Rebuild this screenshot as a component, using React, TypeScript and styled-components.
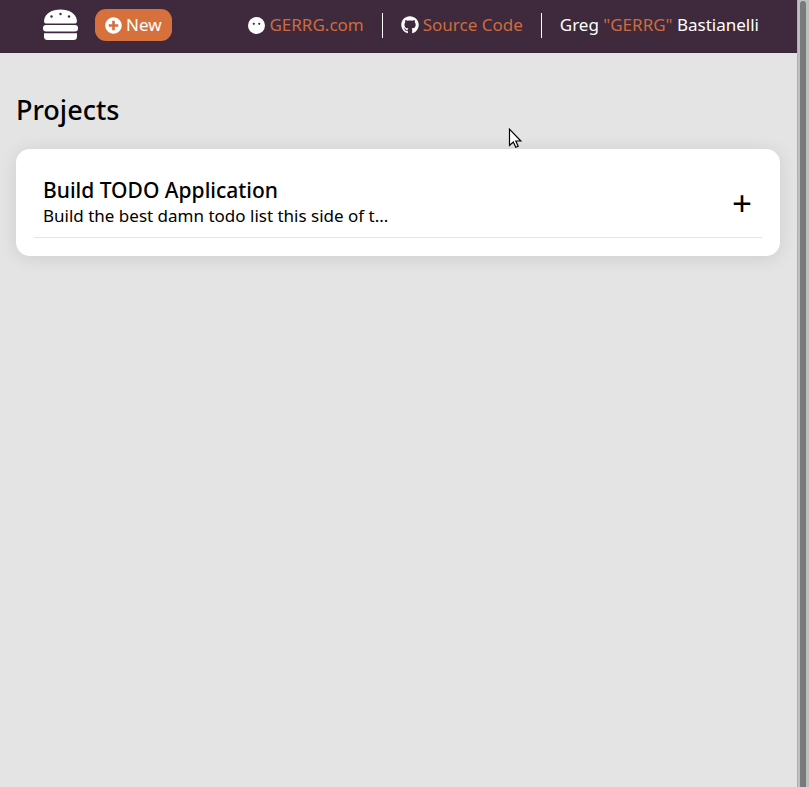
import React from 'react';
import styled, { createGlobalStyle } from 'styled-components';
import { FaGithub, FaPlusCircle } from 'react-icons/fa';

const GlobalStyle = createGlobalStyle`
  *, *::before, *::after { box-sizing: border-box; }
  body {
    margin: 0;
    background: #e4e4e4;
    color: #000;
    font: 400 17px/26px "Noto Sans", "Open Sans", sans-serif;
  }
`;

const Shell = styled.div`
  display: grid;
  grid-template-columns: minmax(0, 1fr) 12px;
  min-height: 100vh;
`;

const Page = styled.div`
  min-width: 0;
`;

const Header = styled.header`
  display: flex;
  align-items: center;
  justify-content: space-between;
  min-height: 53px;
  padding: 9px 20px 11px 43px;
  background: #3e2a3c;
  border-bottom: 1px solid #38233a;
`;

const Brand = styled.div`
  display: flex;
  align-items: center;
  gap: 17px;
`;

const HomeLink = styled.a`
  display: flex;
  color: #fff;
`;

const NewButton = styled.button`
  display: flex;
  align-items: center;
  gap: 4px;
  height: 32px;
  padding: 0 10px;
  border: 0;
  border-radius: 11px;
  background: #d6713e;
  color: #fff;
  font: inherit;
  cursor: pointer;
`;

const Links = styled.ul`
  display: flex;
  align-items: center;
  margin: 0;
  padding: 0;
  list-style: none;
`;

const LinkItem = styled.li`
  display: flex;
  align-items: center;
  gap: 4px;
  height: 25px;
  padding: 0 18px;
  color: #fff;
  white-space: pre;

  & + & {
    border-left: 1px solid #fff;
  }
`;

const Anchor = styled.a`
  color: #cf6b3d;
  text-decoration: none;
`;

const Accent = styled.span`
  color: #cf6b3d;
`;

const Main = styled.main`
  padding: 40px 17px 40px 16px;
`;

const Heading = styled.h1`
  margin: 0 0 22px;
  font-size: 27px;
  line-height: 34px;
  font-weight: 500;
`;

const Card = styled.section`
  padding: 18px;
  border-radius: 14px;
  background: #fff;
  box-shadow: 0 2px 18px rgba(0, 0, 0, 0.1);
`;

const ProjectRow = styled.article`
  display: flex;
  align-items: center;
  justify-content: space-between;
  padding: 10px 10px 8px 9px;
  border-bottom: 1px solid #e4e4e4;
`;

const ProjectTitle = styled.h2`
  margin: 0;
  font-size: 21px;
  line-height: 26px;
  font-weight: 500;
`;

const Description = styled.p`
  margin: 0;
`;

const ExpandButton = styled.button`
  padding: 0;
  border: 0;
  background: none;
  color: #000;
  font: inherit;
  font-size: 35px;
  line-height: 36px;
  cursor: pointer;
`;

const ScrollTrack = styled.div`
  display: flex;
  padding: 1px 3px 0 2px;
  border-left: 1px solid #b1b1b1;
  background: #bfbfbf;
`;

const ScrollThumb = styled.div`
  flex: 1;
  border-radius: 3px 3px 0 0;
  background: #777b7b;
`;

const Pointer = styled.svg`
  position: absolute;
  top: 128px;
  left: 508px;
  pointer-events: none;
`;

const BurgerIcon = () => (
  <svg width="35" height="32" viewBox="0 0 35 32" aria-hidden="true">
    <path
      fill="currentColor"
      d="M3 14.500C1.300 14.500 .8 13 1.200 10.800C2.300 4.500 9 .5 17.500 .5S32.700 4.500 33.800 10.800C34.200 13 33.700 14.500 32 14.500Z"
    />
    <rect x="0" y="16" width="35" height="6.500" rx="3" fill="currentColor" />
    <path fill="currentColor" d="M1 24.200H34V27.500Q34 31 30.500 31H4.500Q1 31 1 27.500Z" />
    <g fill="#3e2a3c">
      <circle cx="17.500" cy="5" r="1.200" />
      <circle cx="8.500" cy="7.500" r="1.200" />
      <circle cx="26" cy="7.500" r="1.200" />
    </g>
  </svg>
);

const FaceIcon = () => (
  <svg width="17" height="17" viewBox="0 0 17 17" aria-hidden="true">
    <circle cx="8.500" cy="8.500" r="8.500" fill="#fff" />
    <circle cx="5.800" cy="6.800" r="1.100" fill="#3e2a3c" />
    <circle cx="11.200" cy="6.800" r="1.100" fill="#3e2a3c" />
  </svg>
);

export default function App() {
  return (
    <>
      <GlobalStyle />
      <Shell>
        <Page>
          <Header>
            <Brand>
              <HomeLink href="#" aria-label="Home">
                <BurgerIcon />
              </HomeLink>
              <NewButton type="button">
                <FaPlusCircle size={17} />
                New
              </NewButton>
            </Brand>
            <Links>
              <LinkItem>
                <FaceIcon />
                <Anchor href="#gerrg">GERRG.com</Anchor>
              </LinkItem>
              <LinkItem>
                <FaGithub size={18} />
                <Anchor href="#source">Source Code</Anchor>
              </LinkItem>
              <LinkItem>
                <span>
                  Greg <Accent>"GERRG"</Accent> Bastianelli
                </span>
              </LinkItem>
            </Links>
          </Header>
          <Main>
            <Heading>Projects</Heading>
            <Card>
              <ProjectRow>
                <div>
                  <ProjectTitle>Build TODO Application</ProjectTitle>
                  <Description>Build the best damn todo list this side of t...</Description>
                </div>
                <ExpandButton type="button" aria-label="Expand project">
                  +
                </ExpandButton>
              </ProjectRow>
            </Card>
          </Main>
        </Page>
        <ScrollTrack>
          <ScrollThumb />
        </ScrollTrack>
      </Shell>
      <Pointer width="15" height="22" viewBox="0 0 15 22" aria-hidden="true">
        <path
          d="M1.500 1.200V17.500L5.300 14L7.800 19.300L10.200 18.200L7.800 13H12.800Z"
          fill="#fff"
          stroke="#000"
          strokeWidth="1.200"
        />
      </Pointer>
    </>
  );
}
